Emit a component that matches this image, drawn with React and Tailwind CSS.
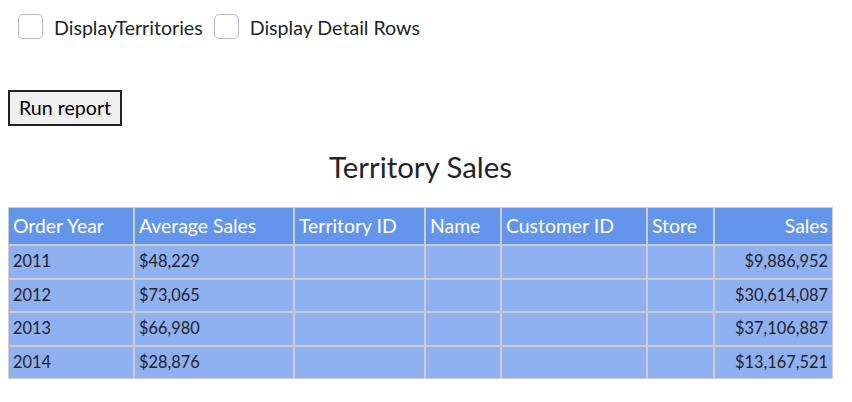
const columns = [
  { label: "Order Year", w: "w-[126px]" },
  { label: "Average Sales", w: "w-[160px]" },
  { label: "Territory ID", w: "w-[131px]" },
  { label: "Name", w: "w-[76px]" },
  { label: "Customer ID", w: "w-[146px]" },
  { label: "Store", w: "w-[67px]" },
  { label: "Sales", w: "w-[119px]", right: true },
];

const rows = [
  { year: "2011", avg: "$48,229", sales: "$9,886,952" },
  { year: "2012", avg: "$73,065", sales: "$30,614,087" },
  { year: "2013", avg: "$66,980", sales: "$37,106,887" },
  { year: "2014", avg: "$28,876", sales: "$13,167,521" },
];

function Check({ label }) {
  return (
    <label className="flex items-center gap-[11px]">
      <span className="w-[25px] h-[25px] rounded-[5px] border border-[#b4bac1] bg-white" />
      <span className="text-[19.6px] leading-[25px] pt-[2px]">{label}</span>
    </label>
  );
}

export default function App() {
  const cell = "border border-[#cccccc] px-[4px] text-left font-normal";
  return (
    <div className="min-h-screen bg-white px-2 font-['Lato',sans-serif] text-[#212529]">
      <div className="flex items-center gap-[11px] pt-[13px] pl-[10px]">
        <Check label="DisplayTerritories" />
        <Check label="Display Detail Rows" />
      </div>

      <button className="mt-[50px] h-[36px] px-[9px] bg-[#efefef] border-2 border-[#222222] text-[19.6px] leading-[32px] text-black">
        Run report
      </button>

      <div className="w-[825px] my-[22.5px] h-[36px] text-center text-[29.4px] leading-[36px]">
        Territory Sales
      </div>

      <table className="w-[825px] table-fixed border-separate border-spacing-0">
        <thead>
          <tr className="h-[38px] bg-[#6495ed] text-white text-[19.4px]">
            {columns.map((c) => (
              <th key={c.label} className={`${cell} ${c.w} ${c.right ? "text-right" : ""}`}>
                {c.label}
              </th>
            ))}
          </tr>
        </thead>
        <tbody>
          {rows.map((r) => (
            <tr key={r.year} className="h-[33.5px] bg-[#8fb0f1] text-[16.4px]">
              <td className={cell}>{r.year}</td>
              <td className={cell}>{r.avg}</td>
              <td className={cell}></td>
              <td className={cell}></td>
              <td className={cell}></td>
              <td className={cell}></td>
              <td className={`${cell} text-right`}>{r.sales}</td>
            </tr>
          ))}
        </tbody>
      </table>
    </div>
  );
}
